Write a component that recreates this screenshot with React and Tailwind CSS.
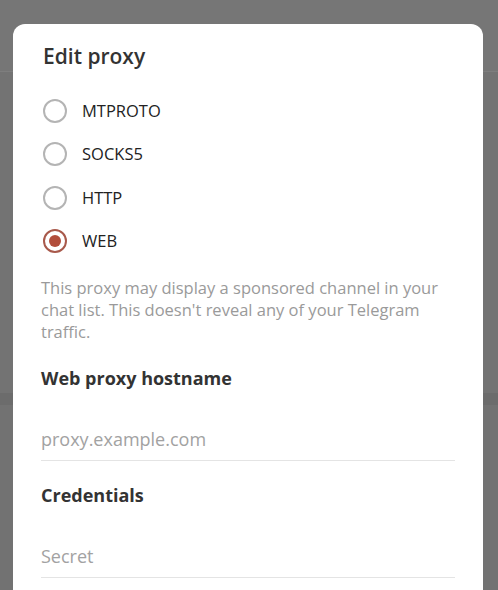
import React from "react";

function Radio({ label, checked }) {
  return (
    <div className="flex h-[43.5px] items-center">
      <div
        className={
          "ml-[2px] flex h-[24px] w-[24px] items-center justify-center rounded-full border-2 " +
          (checked ? "border-[#a8594b]" : "border-[#b4b4b4]")
        }
      >
        {checked && <div className="h-[12px] w-[12px] rounded-full bg-[#b24d3b]" />}
      </div>
      <span className="ml-[15px] text-[16.5px] leading-[24px] text-[#222]">{label}</span>
    </div>
  );
}

function Field({ placeholder }) {
  return (
    <div className="mt-[37px] border-b border-[#e4e4e4] pb-[9px]">
      <div className="text-[18px] leading-[24px] text-[#a2a2a2]">{placeholder}</div>
    </div>
  );
}

export default function App() {
  return (
    <div
      className="relative h-[590px] w-[498px] overflow-hidden bg-[#737373]"
      style={{ fontFamily: '"Open Sans", "Noto Sans", sans-serif' }}
    >
      <div className="flex h-full flex-col">
        <div className="h-[72px] border-b border-[#7e7e7e] bg-[#767676]" />
        <div className="h-[321px] bg-[#737373]" />
        <div className="h-[12px] bg-[#6c6c6c]" />
        <div className="flex-1 bg-[#727272]" />
      </div>
      <div className="absolute left-[13px] top-[24px] h-[600px] w-[470px] rounded-t-[12px] bg-white px-[28px] pt-[18px]">
        <div className="ml-[2px] text-[21px] font-semibold leading-[28px] text-[#333]">Edit proxy</div>
        <div className="mt-[19px]">
          <Radio label="MTPROTO" />
          <Radio label="SOCKS5" />
          <Radio label="HTTP" />
          <Radio label="WEB" checked />
        </div>
        <p className="mt-[14px] text-[16.5px] leading-[22px] text-[#9a9a9a]">
          This proxy may display a sponsored channel in your chat list. This doesn't reveal any of your Telegram traffic.
        </p>
        <div className="mt-[23px] text-[18px] font-bold leading-[24px] text-[#333]">Web proxy hostname</div>
        <Field placeholder="proxy.example.com" />
        <div className="mt-[22px] text-[18px] font-bold leading-[24px] text-[#333]">Credentials</div>
        <Field placeholder="Secret" />
      </div>
    </div>
  );
}
